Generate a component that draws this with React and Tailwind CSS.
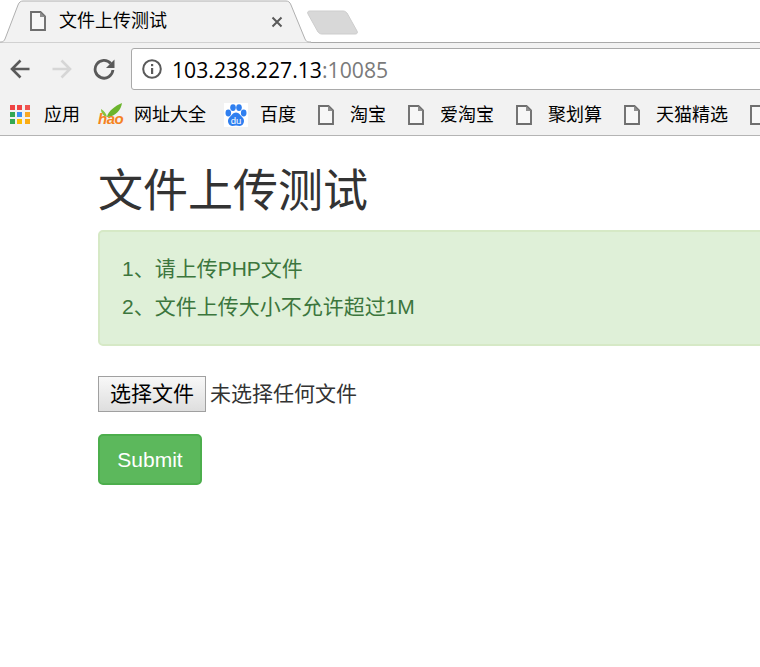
import React from 'react';

const DocIcon = ({ className = '' }) => (
  <svg width="16" height="20" viewBox="0 0 16 20" className={className} fill="none">
    <path d="M1 1h9.5L15 5.5V19H1z" stroke="#6e6e6e" strokeWidth="1.9" fill="#f7f7f7" />
    <path d="M10 1v5h5z" fill="#8f8f8f" />
  </svg>
);

const AppsIcon = () => {
  const colors = ['#ef4444', '#ef4444', '#f0544f', '#34a853', '#3b8ff3', '#f9a825', '#34a853', '#fbbc05', '#fbac13'];
  return (
    <div className="grid grid-cols-3 gap-[2px] w-[20px] shrink-0">
      {colors.map((c, i) => (
        <svg key={i} width="5" height="5" viewBox="0 0 5 5">
          <rect width="5" height="5" fill={c} />
        </svg>
      ))}
    </div>
  );
};

const HaoIcon = () => (
  <div className="relative w-[25px] h-[24px] shrink-0">
    <svg width="25" height="15" viewBox="0 0 25 15" className="absolute top-0 left-0">
      <path d="M9 14C10 8 17 3 24 0c-1 7-6 13-15 14z" fill="#6cb52d" />
      <path d="M9 14C8 10 6 8 3 6c0 4 2 7 6 8z" fill="#86c440" />
    </svg>
    <span className="absolute left-0 top-[8px] text-[15px] leading-[16px] italic font-bold tracking-[-0.5px] text-[#f58220] font-['Liberation_Sans',sans-serif]">hao</span>
  </div>
);

const BaiduIcon = () => (
  <svg width="24" height="24" viewBox="0 0 24 24" className="shrink-0">
    <rect width="24" height="24" fill="#fff" />
    <ellipse cx="4.3" cy="10" rx="2.8" ry="3.4" fill="#2f7ff0" />
    <ellipse cx="9" cy="4.6" rx="2.8" ry="3.4" fill="#2f7ff0" />
    <ellipse cx="15" cy="4.6" rx="2.8" ry="3.4" fill="#2f7ff0" />
    <ellipse cx="19.7" cy="10" rx="2.8" ry="3.4" fill="#2f7ff0" />
    <path d="M12 9.5c3 0 4.500 3 7 5.500 2.500 3.500 0 8-3.500 8-1.300 0-2.300-.5-3.500-.5s-2.200.5-3.500.5c-3.500 0-6-4.500-3.500-8 2.500-2.500 4-5.500 7-5.500z" fill="#2f7ff0" />
    <text x="12" y="20.5" textAnchor="middle" fontSize="9.500" fontFamily="Liberation Sans" fill="#fff">du</text>
  </svg>
);

const Bookmark = ({ label }) => (
  <div className="flex items-center gap-4 shrink-0 mr-[22px]">
    <DocIcon />
    <span className="pt-[1px]">{label}</span>
  </div>
);

export default function App() {
  return (
    <div className="w-[760px] h-[667px] overflow-hidden bg-white font-['Liberation_Sans','Noto_Sans_CJK_SC',sans-serif]">
      {/* Tab strip */}
      <div className="relative h-[43px] bg-white border-b border-[#a9a9a9]">
        <svg width="360" height="43" viewBox="0 0 360 43" className="absolute top-0 left-0">
          <path d="M-1 42h2c2 0 3-1 4-3L18 5c1-3 3-4 5-4h263c2 0 4 1 5 4l14 34c1 2 2 3 4 3h2v1H-1z" fill="#f2f2f2" stroke="#b0b0b0" strokeWidth="1" />
          <path d="M-1 43h312v1H-1z" fill="#f2f2f2" />
          <path d="M310 11h33c2 0 3 1 4 2l10 18c1 2 0 3-2 3h-33c-2 0-3-1-4-2l-10-18c-1-2 0-3 2-3z" fill="#d8d8d8" stroke="#cdcdcd" />
        </svg>
        <div className="relative flex items-center h-[42px] w-[310px] pl-[30px] text-[18px] text-black">
          <DocIcon />
          <span className="ml-[13px]">文件上传测试</span>
          <svg width="12" height="12" viewBox="0 0 12 12" className="absolute left-[271px] top-[16px]">
            <path d="M1.5 1.5l9 9M10.5 1.5l-9 9" stroke="#5a5a5a" strokeWidth="2" />
          </svg>
        </div>
      </div>

      {/* Toolbar */}
      <div className="flex items-center h-[51px] bg-[#f2f2f2] pl-[10px] pb-[3px] pt-[3px]">
        <svg width="20" height="20" viewBox="0 0 20 20" className="shrink-0">
          <path d="M19.5 10H2.5M10.5 1.5L2 10l8.5 8.5" stroke="#5a5a5a" strokeWidth="2.6" fill="none" />
        </svg>
        <svg width="20" height="20" viewBox="0 0 20 20" className="ml-[22px] shrink-0">
          <path d="M.5 10h17M9.5 1.5L18 10l-8.5 8.500" stroke="#d6d6d6" strokeWidth="2.6" fill="none" />
        </svg>
        <svg width="22" height="22" viewBox="0 0 22 22" className="ml-[21px] shrink-0">
          <path d="M17.8 5.5A8.9 8.9 0 1 0 19.9 12" stroke="#5a5a5a" strokeWidth="2.8" fill="none" />
          <path d="M13 10h8.5V1.5z" fill="#5a5a5a" />
        </svg>
        <div className="flex items-center h-[42px] flex-1 mr-[-10px] ml-[16px] pl-[10px] bg-white border border-[#a9a9a9] rounded-[3px]">
          <svg width="20" height="20" viewBox="0 0 20 20" className="shrink-0">
            <circle cx="10" cy="10" r="8.8" stroke="#5a5a5a" strokeWidth="2" fill="none" />
            <rect x="9" y="9" width="2.2" height="6" fill="#5a5a5a" />
            <rect x="9" y="5" width="2.2" height="2.2" fill="#5a5a5a" />
          </svg>
          <span className="ml-[10px] pt-[2px] text-[21.2px] font-['Open_Sans',sans-serif] text-black">
            103.238.227.13<span className="text-[#7a7a7a]">:10085</span>
          </span>
        </div>
      </div>

      {/* Bookmarks bar */}
      <div className="flex items-center h-[42px] pl-[10px] bg-[#f2f2f2] border-b border-[#b4b4b4] text-[18px] text-black whitespace-nowrap overflow-hidden">
        <AppsIcon />
        <span className="ml-[14px] mr-[18px] pt-[1px]">应用</span>
        <HaoIcon />
        <span className="ml-[11px] mr-[18px] pt-[1px]">网址大全</span>
        <BaiduIcon />
        <span className="ml-[12px] mr-[22px] pt-[1px]">百度</span>
        <Bookmark label="淘宝" />
        <Bookmark label="爱淘宝" />
        <Bookmark label="聚划算" />
        <Bookmark label="天猫精选" />
        <DocIcon className="shrink-0" />
      </div>

      {/* Page */}
      <div className="pl-[98px] pt-[31px] w-[1000px]">
        <h1 className="text-[45px] leading-[50px] text-[#333] mb-[13px]">文件上传测试</h1>
        <div className="h-[116px] pl-[22px] pt-[18px] bg-[#dff0d8] border-2 border-[#d6e9c6] rounded-[5px] text-[21px] leading-[38px] text-[#3c763d]">
          <p>1、请上传PHP文件</p>
          <p>2、文件上传大小不允许超过1M</p>
        </div>
        <div className="flex items-center mt-[30px] text-[21px] text-[#333]">
          <button className="w-[108px] h-[36px] border border-[#a0a0a0] bg-linear-to-b from-[#f8f8f8] to-[#dedede] text-black">选择文件</button>
          <span className="ml-[4px]">未选择任何文件</span>
        </div>
        <button className="block mt-[22px] w-[104px] h-[51px] bg-[#5cb85c] border-2 border-[#4cae4c] rounded-[5px] text-[21px] text-white">Submit</button>
      </div>
    </div>
  );
}
